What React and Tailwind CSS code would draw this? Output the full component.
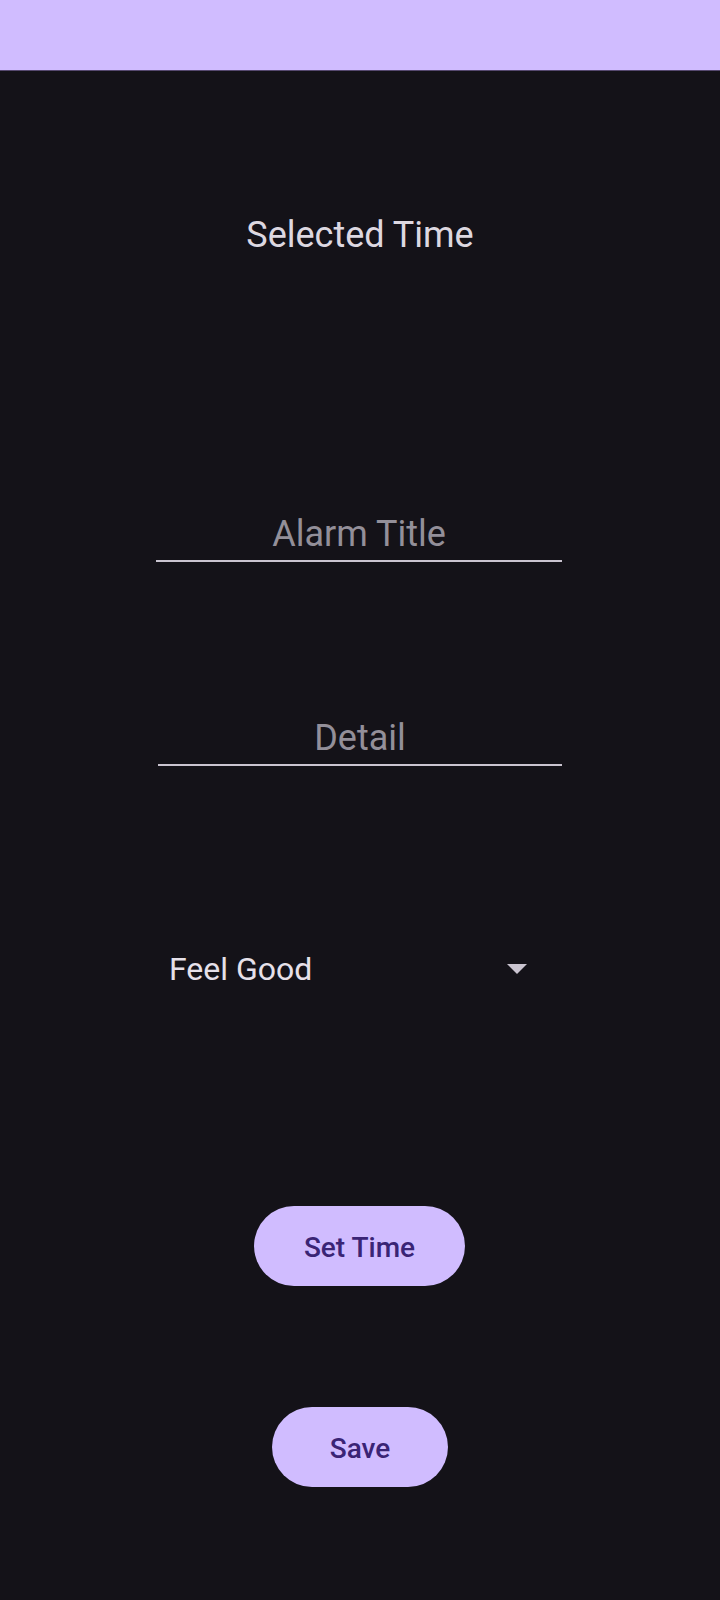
import React, { useState } from "react";

const AlarmForm = () => {
  const [title, setTitle] = useState("");
  const [detail, setDetail] = useState("");

  return (
    <div
      className="min-h-[1600px] w-[720px] flex flex-col bg-[#141218]"
      style={{ fontFamily: "Roboto, 'Noto Sans', sans-serif" }}
    >
      {/* Top bar */}
      <div className="h-[71px] w-full bg-[#D0BCFF] border-b border-[#56496f]" />

      {/* Selected time */}
      <p className="mt-[144px] text-center text-[36px] leading-[40px] text-[#DDD8E1]">
        Selected Time
      </p>

      {/* Alarm title */}
      <div className="mt-[257px] ml-[156px] w-[406px] pb-[4px] border-b-2 border-[#CAC4D0]">
        <input
          value={title}
          onChange={(e) => setTitle(e.target.value)}
          placeholder="Alarm Title"
          className="w-full h-[44px] bg-transparent text-center text-[36px] leading-[44px] text-[#E6E0E9] placeholder:text-[#938F99] outline-none"
        />
      </div>

      {/* Detail */}
      <div className="mt-[154px] ml-[158px] w-[404px] pb-[4px] border-b-2 border-[#CAC4D0]">
        <input
          value={detail}
          onChange={(e) => setDetail(e.target.value)}
          placeholder="Detail"
          className="w-full h-[44px] bg-transparent text-center text-[36px] leading-[44px] text-[#E6E0E9] placeholder:text-[#938F99] outline-none"
        />
      </div>

      {/* Dropdown */}
      <div className="mt-[183px] ml-[169px] w-[358px] h-[40px] flex items-center justify-between">
        <span className="text-[32px] leading-[40px] text-[#E6E0E9]">Feel Good</span>
        <svg width="20" height="10" viewBox="0 0 20 10">
          <path d="M0 0 L20 0 L10 10 Z" fill="#CAC4D0" />
        </svg>
      </div>

      {/* Buttons */}
      <button className="mt-[217px] self-center ml-[-1px] h-[80px] w-[211px] pt-[4px] rounded-full bg-[#D0BCFF] text-[28px] font-medium text-[#3A2475]">
        Set Time
      </button>

      <button className="mt-[121px] self-center h-[80px] w-[176px] pt-[4px] rounded-full bg-[#D0BCFF] text-[28px] font-medium text-[#3A2475]">
        Save
      </button>
    </div>
  );
};

export default function App() {
  return <AlarmForm />;
}
